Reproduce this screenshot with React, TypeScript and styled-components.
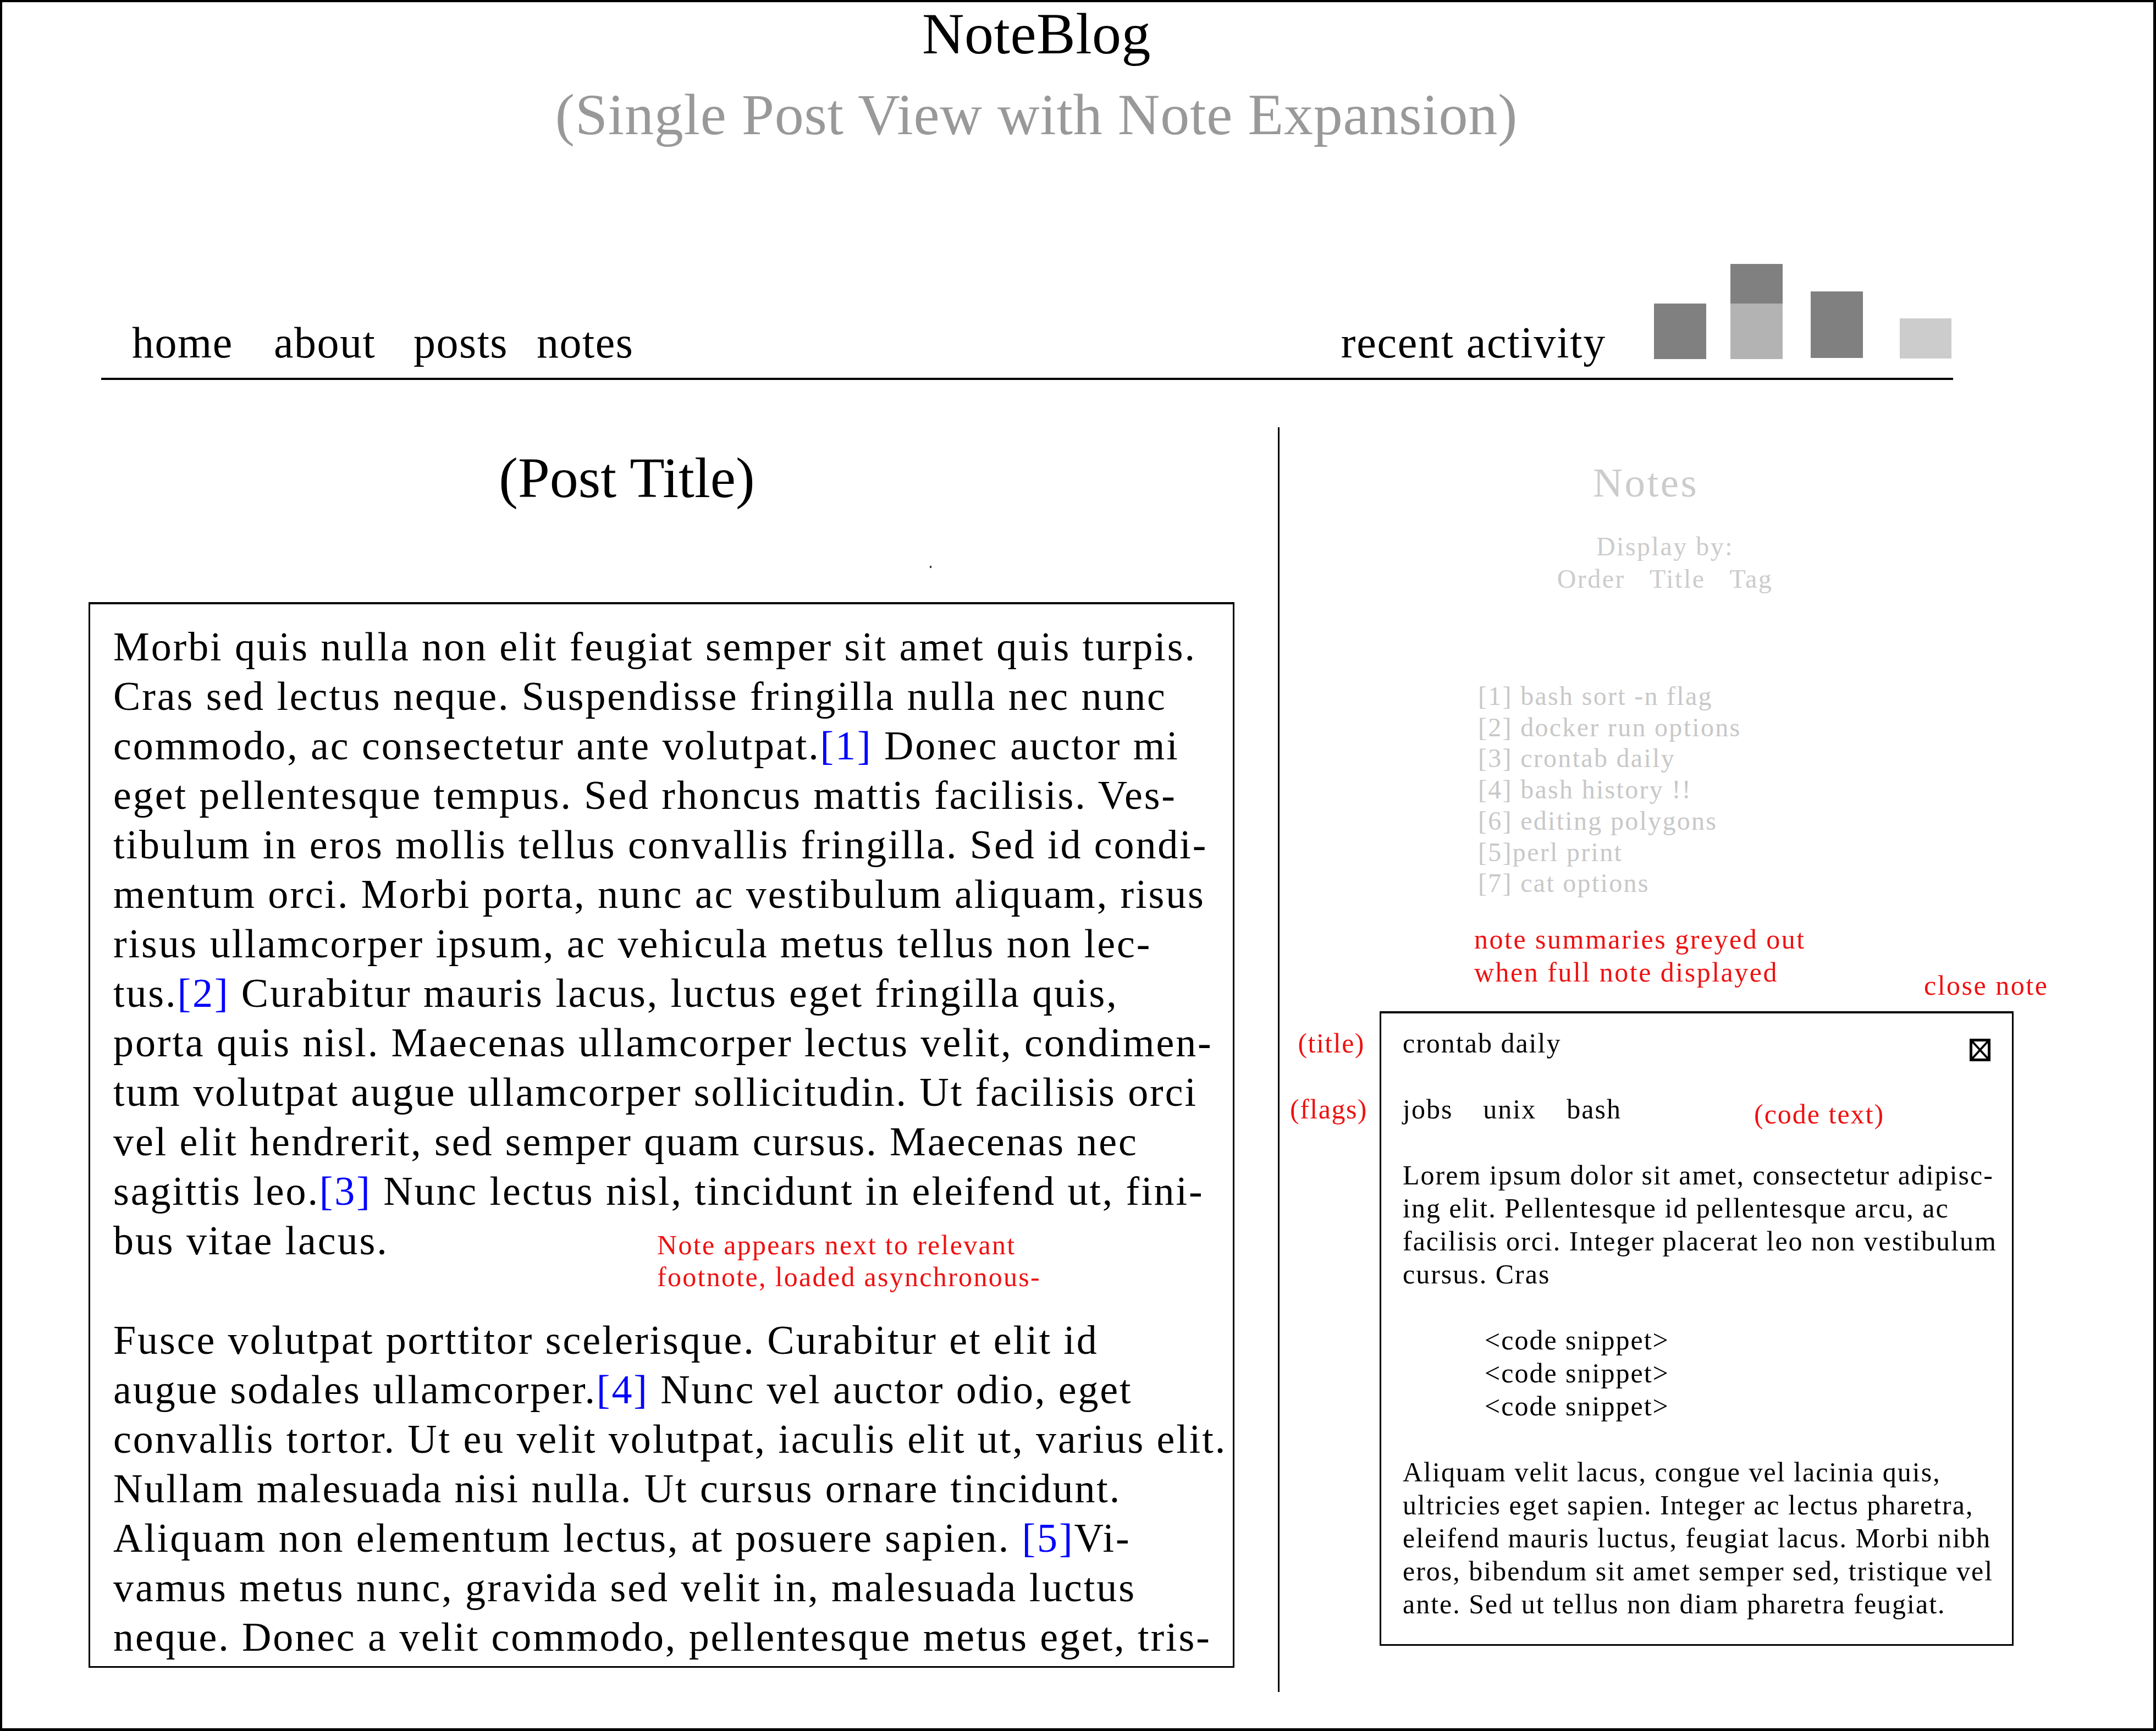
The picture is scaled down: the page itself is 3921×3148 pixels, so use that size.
import React from "react";
import styled, { createGlobalStyle } from "styled-components";

const GlobalStyle = createGlobalStyle`
  html, body { margin: 0; padding: 0; background: #fff; }
  body { font-family: "Liberation Serif", "Times New Roman", serif; color: #000; }
  * { box-sizing: border-box; }
`;

const RED = "#ee1111";

const Page = styled.div`
  width: 3921px;
  height: 3148px;
  border-style: solid;
  border-color: #000;
  border-width: 4px 5px 5px 4px;
  overflow: hidden;
  display: flex;
  flex-direction: column;
`;

const Header = styled.header`
  display: flex;
  flex-direction: column;
  align-items: center;
  padding-right: 150px;
`;

const SiteTitle = styled.h1`
  margin: 0;
  font-weight: 400;
  font-size: 106px;
  line-height: 116px;
  letter-spacing: 0.5px;
`;

const SiteSubtitle = styled.div`
  margin-top: 31px;
  font-size: 106px;
  line-height: 116px;
  letter-spacing: 0.8px;
  color: #999;
`;

const NavBar = styled.nav`
  margin: 213px 0 0 180px;
  width: 3368px;
  display: flex;
  align-items: flex-end;
  justify-content: space-between;
  padding: 0 3px 14px 56px;
  border-bottom: 4px solid #000;
`;

const NavLinks = styled.div`
  display: flex;
  align-items: flex-end;
`;

const NavLink = styled.a<{ $w?: number }>`
  display: block;
  width: ${(p) => (p.$w ? `${p.$w}px` : "auto")};
  font-size: 80px;
  line-height: 100px;
  letter-spacing: 1.5px;
  color: #000;
  text-decoration: none;
`;

const Activity = styled.div`
  display: flex;
  align-items: flex-end;
  gap: 87px;
`;

const RecentLabel = styled.span`
  font-size: 80px;
  line-height: 100px;
  letter-spacing: 1.8px;
`;

const Chart = styled.svg`
  display: block;
  margin-bottom: 20px;
`;

const Main = styled.main`
  margin-top: 86px;
  display: flex;
  align-items: flex-start;
`;

const PostColumn = styled.section`
  width: 2320px;
  flex-shrink: 0;
  display: flex;
  flex-direction: column;
`;

const PostTitle = styled.h2`
  margin: 34px 0 0;
  padding-right: 48px;
  text-align: center;
  font-weight: 400;
  font-size: 104px;
  line-height: 116px;
`;

const Speck = styled.div`
  width: 3px;
  height: 4px;
  background: #333;
  margin: 102px 0 0 1687px;
`;

const PostBox = styled.article`
  margin: 62px 0 0 157px;
  width: 2084px;
  height: 1938px;
  border: 3px solid #000;
  border-top-width: 4px;
  padding: 32px 0 0 42px;
  overflow: hidden;
`;

const Paragraph = styled.div<{ $gap?: number }>`
  margin-top: ${(p) => p.$gap ?? 0}px;
`;

const Line = styled.div`
  font-size: 74px;
  line-height: 90px;
  letter-spacing: 2.9px;
  white-space: nowrap;
`;

const Ref = styled.a`
  color: #0000ff;
  text-decoration: none;
`;

const FootnoteRow = styled.div`
  display: grid;
  grid-template-columns: 989px auto;
  align-items: baseline;
`;

const RedNote = styled.div`
  color: ${RED};
  font-size: 50px;
  line-height: 58px;
  letter-spacing: 2.3px;
  white-space: nowrap;
`;

const Divider = styled.div`
  width: 3px;
  height: 2300px;
  background: #000;
  flex-shrink: 0;
`;

const SideColumn = styled.aside`
  flex: 1;
  display: flex;
  flex-direction: column;
`;

const NotesHeading = styled.h3`
  margin: 58px 0 0;
  width: 1332px;
  text-align: center;
  font-weight: 400;
  font-size: 75px;
  line-height: 86px;
  letter-spacing: 3.4px;
  color: #ccc;
`;

const DisplayBy = styled.div`
  width: 1332px;
  padding-left: 70px;
  margin-top: 43px;
  color: #ccc;
  font-size: 48px;
  line-height: 59px;
  letter-spacing: 2.5px;
  text-align: center;
`;

const DisplayOptions = styled.div`
  display: flex;
  justify-content: center;
  gap: 44px;
`;

const NoteList = styled.ul`
  list-style: none;
  margin: 156px 0 0 361px;
  padding: 0;
  color: #c8c8c8;
  font-size: 48px;
  line-height: 56.7px;
  letter-spacing: 2.3px;
  white-space: nowrap;
`;

const AnnotationRow = styled.div`
  display: grid;
  grid-template-columns: 818px auto;
  align-items: start;
  margin: 43px 0 0 354px;
`;

const Annotation = styled.div<{ $top?: number }>`
  color: ${RED};
  font-size: 50px;
  line-height: 60px;
  letter-spacing: 2.5px;
  white-space: nowrap;
  margin-top: ${(p) => p.$top ?? 0}px;
`;

const NoteBox = styled.div`
  margin: 17px 0 0 182px;
  width: 1153px;
  height: 1154px;
  border: 3px solid #000;
  border-top-width: 4px;
  padding: 24px 39px 0 39px;
  font-size: 50px;
  line-height: 60px;
  letter-spacing: 2px;
`;

const NoteRow = styled.div<{ $gap?: number }>`
  position: relative;
  height: 60px;
  margin-top: ${(p) => p.$gap ?? 0}px;
  display: flex;
  align-items: flex-start;
  justify-content: space-between;
  white-space: nowrap;
`;

const SideLabel = styled.span<{ $offset: number }>`
  position: absolute;
  top: 0;
  right: calc(100% + ${(p) => p.$offset}px);
  color: ${RED};
  letter-spacing: 1.5px;
  white-space: nowrap;
`;

const CloseIcon = styled.svg`
  display: block;
  margin-top: 22px;
`;

const TagList = styled.div`
  display: flex;
  gap: 55px;
  width: 639px;
`;

const CodeLabel = styled.span`
  margin-top: 9px;
  margin-right: auto;
  color: ${RED};
`;

const NoteText = styled.div<{ $indent?: number }>`
  margin-top: 60px;
  padding-left: ${(p) => p.$indent ?? 0}px;
  white-space: nowrap;
`;

const bars = [
  { x: 0, parts: [{ y: 72, h: 101, c: "#808080" }] },
  {
    x: 139,
    parts: [
      { y: 0, h: 72, c: "#808080" },
      { y: 72, h: 101, c: "#b3b3b3" },
    ],
  },
  { x: 285, parts: [{ y: 50, h: 121, c: "#808080" }] },
  { x: 447, parts: [{ y: 99, h: 73, c: "#cccccc" }] },
];

const para1: React.ReactNode[] = [
  "Morbi quis nulla non elit feugiat semper sit amet quis turpis.",
  "Cras sed lectus neque. Suspendisse fringilla nulla nec nunc",
  <>commodo, ac consectetur ante volutpat.<Ref>[1]</Ref> Donec auctor mi</>,
  "eget pellentesque tempus. Sed rhoncus mattis facilisis. Ves-",
  "tibulum in eros mollis tellus convallis fringilla. Sed id condi-",
  "mentum orci. Morbi porta, nunc ac vestibulum aliquam, risus",
  "risus ullamcorper ipsum, ac vehicula metus tellus non lec-",
  <>tus.<Ref>[2]</Ref> Curabitur mauris lacus, luctus eget fringilla quis,</>,
  "porta quis nisl. Maecenas ullamcorper lectus velit, condimen-",
  "tum volutpat augue ullamcorper sollicitudin. Ut facilisis orci",
  "vel elit hendrerit, sed semper quam cursus. Maecenas nec",
  <>sagittis leo.<Ref>[3]</Ref> Nunc lectus nisl, tincidunt in eleifend ut, fini-</>,
];

const para2: React.ReactNode[] = [
  "Fusce volutpat porttitor scelerisque. Curabitur et elit id",
  <>augue sodales ullamcorper.<Ref>[4]</Ref> Nunc vel auctor odio, eget</>,
  "convallis tortor. Ut eu velit volutpat, iaculis elit ut, varius elit.",
  "Nullam malesuada nisi nulla. Ut cursus ornare tincidunt.",
  <>Aliquam non elementum lectus, at posuere sapien. <Ref>[5]</Ref>Vi-</>,
  "vamus metus nunc, gravida sed velit in, malesuada luctus",
  "neque. Donec a velit commodo, pellentesque metus eget, tris-",
];

const notes = [
  "[1] bash sort -n flag",
  "[2] docker run options",
  "[3] crontab daily",
  "[4] bash history !!",
  "[6] editing polygons",
  "[5]perl print",
  "[7] cat options",
];

const loremLines = [
  "Lorem ipsum dolor sit amet, consectetur adipisc-",
  "ing elit. Pellentesque id pellentesque arcu, ac",
  "facilisis orci. Integer placerat leo non vestibulum",
  "cursus. Cras",
];

const aliquamLines = [
  "Aliquam velit lacus, congue vel lacinia quis,",
  "ultricies eget sapien. Integer ac lectus pharetra,",
  "eleifend mauris luctus, feugiat lacus. Morbi nibh",
  "eros, bibendum sit amet semper sed, tristique vel",
  "ante. Sed ut tellus non diam pharetra feugiat.",
];

export default function App() {
  return (
    <>
      <GlobalStyle />
      <Page>
        <Header>
          <SiteTitle>NoteBlog</SiteTitle>
          <SiteSubtitle>(Single Post View with Note Expansion)</SiteSubtitle>
        </Header>

        <NavBar>
          <NavLinks>
            <NavLink $w={258}>home</NavLink>
            <NavLink $w={254}>about</NavLink>
            <NavLink $w={224}>posts</NavLink>
            <NavLink>notes</NavLink>
          </NavLinks>
          <Activity>
            <RecentLabel>recent activity</RecentLabel>
            <Chart width="541" height="173" viewBox="0 0 541 173">
              {bars.map((b, i) =>
                b.parts.map((p, j) => (
                  <rect key={`${i}-${j}`} x={b.x} y={p.y} width={95} height={p.h} fill={p.c} />
                ))
              )}
            </Chart>
          </Activity>
        </NavBar>

        <Main>
          <PostColumn>
            <PostTitle>(Post Title)</PostTitle>
            <Speck />
            <PostBox>
              <Paragraph>
                {para1.map((l, i) => (
                  <Line key={i}>{l}</Line>
                ))}
                <FootnoteRow>
                  <Line>bus vitae lacus.</Line>
                  <RedNote>
                    Note appears next to relevant
                    <br />
                    footnote, loaded asynchronous-
                  </RedNote>
                </FootnoteRow>
              </Paragraph>
              <Paragraph $gap={41}>
                {para2.map((l, i) => (
                  <Line key={i}>{l}</Line>
                ))}
              </Paragraph>
            </PostBox>
          </PostColumn>

          <Divider />

          <SideColumn>
            <NotesHeading>Notes</NotesHeading>
            <DisplayBy>
              <div>Display by:</div>
              <DisplayOptions>
                <span>Order</span>
                <span>Title</span>
                <span>Tag</span>
              </DisplayOptions>
            </DisplayBy>
            <NoteList>
              {notes.map((n) => (
                <li key={n}>{n}</li>
              ))}
            </NoteList>
            <AnnotationRow>
              <Annotation>
                note summaries greyed out
                <br />
                when full note displayed
              </Annotation>
              <Annotation $top={84}>close note</Annotation>
            </AnnotationRow>
            <NoteBox>
              <NoteRow>
                <SideLabel $offset={69}>(title)</SideLabel>
                <span>crontab daily</span>
                <CloseIcon width="38" height="41" viewBox="0 0 38 41">
                  <rect x="2.5" y="2.5" width="33" height="36" fill="none" stroke="#000" strokeWidth="5" />
                  <path d="M3 3 L35 38 M35 3 L3 38" stroke="#000" strokeWidth="4" />
                </CloseIcon>
              </NoteRow>
              <NoteRow $gap={60}>
                <SideLabel $offset={64}>(flags)</SideLabel>
                <TagList>
                  <span>jobs</span>
                  <span>unix</span>
                  <span>bash</span>
                </TagList>
                <CodeLabel>(code text)</CodeLabel>
              </NoteRow>
              <NoteText>
                {loremLines.map((l) => (
                  <div key={l}>{l}</div>
                ))}
              </NoteText>
              <NoteText $indent={149}>
                <div>&lt;code snippet&gt;</div>
                <div>&lt;code snippet&gt;</div>
                <div>&lt;code snippet&gt;</div>
              </NoteText>
              <NoteText>
                {aliquamLines.map((l) => (
                  <div key={l}>{l}</div>
                ))}
              </NoteText>
            </NoteBox>
          </SideColumn>
        </Main>
      </Page>
    </>
  );
}
